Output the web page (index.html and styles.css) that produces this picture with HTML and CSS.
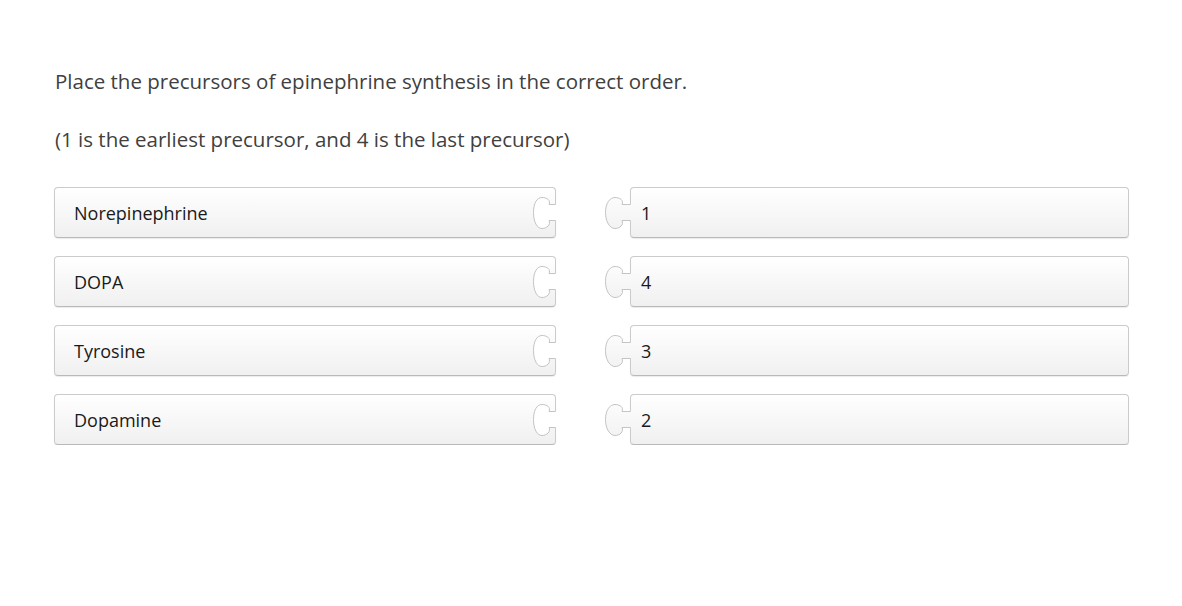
FILE: index.html
```html
<!DOCTYPE html>
<html>
<head>
<meta charset="utf-8">
<link rel="stylesheet" href="styles.css">
</head>
<body>
<main class="page">
  <p class="prompt">Place the precursors of epinephrine synthesis in the correct order.</p>
  <p class="prompt hint">(1 is the earliest precursor, and 4 is the last precursor)</p>
  <div class="pairs">
    <div class="card left"><span>Norepinephrine</span>
      <svg class="socket" viewBox="0 0 40 51" width="40" height="51"><path class="hole" d="M41 17.5 H33 C35 13.5 31 10.5 26 10.5 C21 10.5 17.5 16 17.5 25.5 C17.5 35 21 41.5 26 41.5 C31 41.5 35 37.5 33 33.5 H41 Z"/><path class="edge" d="M39.5 17.5 H33 C35 13.5 31 10.5 26 10.5 C21 10.5 17.5 16 17.5 25.5 C17.5 35 21 41.5 26 41.5 C31 41.5 35 37.5 33 33.5 H39.5"/></svg>
    </div>
    <div class="card right"><span>1</span>
      <svg class="tab" viewBox="0 0 27 51" width="27" height="51"><defs><linearGradient id="g1" x1="0" y1="0" x2="0" y2="51" gradientUnits="userSpaceOnUse"><stop offset="0" stop-color="#ffffff"/><stop offset="1" stop-color="#f0f0f0"/></linearGradient></defs><path fill="url(#g1)" d="M28 17.5 H18 C20 13.5 16 10.5 11 10.5 C6 10.5 1.5 16 1.5 25.5 C1.5 35 6 41.5 11 41.5 C16 41.5 20 37.5 18 33.5 H28 Z"/><path class="edge" d="M26.5 17.5 H18 C20 13.5 16 10.5 11 10.5 C6 10.5 1.5 16 1.5 25.5 C1.5 35 6 41.5 11 41.5 C16 41.5 20 37.5 18 33.5 H26.5"/></svg>
    </div>

    <div class="card left"><span>DOPA</span>
      <svg class="socket" viewBox="0 0 40 51" width="40" height="51"><path class="hole" d="M41 17.5 H33 C35 13.5 31 10.5 26 10.5 C21 10.5 17.5 16 17.5 25.5 C17.5 35 21 41.5 26 41.5 C31 41.5 35 37.5 33 33.5 H41 Z"/><path class="edge" d="M39.5 17.5 H33 C35 13.5 31 10.5 26 10.5 C21 10.5 17.5 16 17.5 25.5 C17.5 35 21 41.5 26 41.5 C31 41.5 35 37.5 33 33.5 H39.5"/></svg>
    </div>
    <div class="card right"><span>4</span>
      <svg class="tab" viewBox="0 0 27 51" width="27" height="51"><path fill="url(#g1)" d="M28 17.5 H18 C20 13.5 16 10.5 11 10.5 C6 10.5 1.5 16 1.5 25.5 C1.5 35 6 41.5 11 41.5 C16 41.5 20 37.5 18 33.5 H28 Z"/><path class="edge" d="M26.5 17.5 H18 C20 13.5 16 10.5 11 10.5 C6 10.5 1.5 16 1.5 25.5 C1.5 35 6 41.5 11 41.5 C16 41.5 20 37.5 18 33.5 H26.5"/></svg>
    </div>

    <div class="card left"><span>Tyrosine</span>
      <svg class="socket" viewBox="0 0 40 51" width="40" height="51"><path class="hole" d="M41 17.5 H33 C35 13.5 31 10.5 26 10.5 C21 10.5 17.5 16 17.5 25.5 C17.5 35 21 41.5 26 41.5 C31 41.5 35 37.5 33 33.5 H41 Z"/><path class="edge" d="M39.5 17.5 H33 C35 13.5 31 10.5 26 10.5 C21 10.5 17.5 16 17.5 25.5 C17.5 35 21 41.5 26 41.5 C31 41.5 35 37.5 33 33.5 H39.5"/></svg>
    </div>
    <div class="card right"><span>3</span>
      <svg class="tab" viewBox="0 0 27 51" width="27" height="51"><path fill="url(#g1)" d="M28 17.5 H18 C20 13.5 16 10.5 11 10.5 C6 10.5 1.5 16 1.5 25.5 C1.5 35 6 41.5 11 41.5 C16 41.5 20 37.5 18 33.5 H28 Z"/><path class="edge" d="M26.5 17.5 H18 C20 13.5 16 10.5 11 10.5 C6 10.5 1.5 16 1.5 25.5 C1.5 35 6 41.5 11 41.5 C16 41.5 20 37.5 18 33.5 H26.5"/></svg>
    </div>

    <div class="card left"><span>Dopamine</span>
      <svg class="socket" viewBox="0 0 40 51" width="40" height="51"><path class="hole" d="M41 17.5 H33 C35 13.5 31 10.5 26 10.5 C21 10.5 17.5 16 17.5 25.5 C17.5 35 21 41.5 26 41.5 C31 41.5 35 37.5 33 33.5 H41 Z"/><path class="edge" d="M39.5 17.5 H33 C35 13.5 31 10.5 26 10.5 C21 10.5 17.5 16 17.5 25.5 C17.5 35 21 41.5 26 41.5 C31 41.5 35 37.5 33 33.5 H39.5"/></svg>
    </div>
    <div class="card right"><span>2</span>
      <svg class="tab" viewBox="0 0 27 51" width="27" height="51"><path fill="url(#g1)" d="M28 17.5 H18 C20 13.5 16 10.5 11 10.5 C6 10.5 1.5 16 1.5 25.5 C1.5 35 6 41.5 11 41.5 C16 41.5 20 37.5 18 33.5 H28 Z"/><path class="edge" d="M26.5 17.5 H18 C20 13.5 16 10.5 11 10.5 C6 10.5 1.5 16 1.5 25.5 C1.5 35 6 41.5 11 41.5 C16 41.5 20 37.5 18 33.5 H26.5"/></svg>
    </div>
  </div>
</main>
</body>
</html>
```
FILE: styles.css
```css
html, body {
  margin: 0;
  background: #ffffff;
}
.page {
  padding: 67px 0 0 54px;
  font-family: "Open Sans", "Noto Sans", sans-serif;
}
.prompt {
  margin: 0 0 30px 1px;
  font-size: 20.5px;
  line-height: 28px;
  color: #404040;
}
.hint {
  margin-bottom: 34px;
}
.pairs {
  display: grid;
  grid-template-columns: 502px 499px;
  column-gap: 74px;
  row-gap: 18px;
}
.card {
  position: relative;
  box-sizing: border-box;
  height: 51px;
  border: 1px solid #cbcbcb;
  border-bottom-color: #b9b9b9;
  border-radius: 4px;
  background: linear-gradient(#ffffff, #f0f0f0);
  box-shadow: 0 1px 1px rgba(0, 0, 0, 0.08);
  display: flex;
  align-items: center;
  font-size: 18px;
  color: #1a1a1a;
}
.card.left {
  padding-left: 19px;
}
.card.right {
  padding-left: 10px;
}
.socket {
  position: absolute;
  right: -1px;
  top: -1px;
  overflow: visible;
}
.tab {
  position: absolute;
  left: -27px;
  top: -1px;
  overflow: visible;
}
.hole {
  fill: #ffffff;
}
.edge {
  fill: none;
  stroke: #c4c4c4;
  stroke-width: 1;
}
```
